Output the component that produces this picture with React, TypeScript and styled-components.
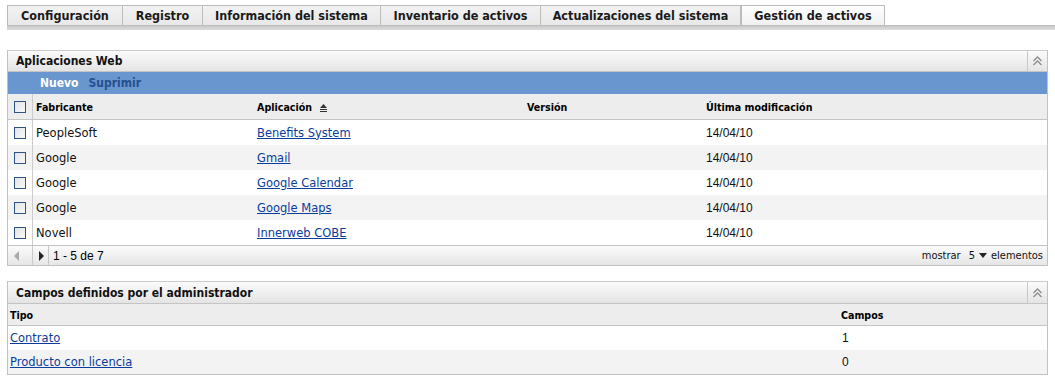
import React from "react";
import styled, { createGlobalStyle } from "styled-components";

const Global = createGlobalStyle`
  html, body { margin: 0; padding: 0; background: #fff; }
  body { font-family: "DejaVu Sans", Verdana, sans-serif; font-size: 12px; color: #000; }
`;

const Page = styled.div`
  width: 1055px;
  height: 383px;
  overflow: hidden;
  padding-top: 5px;
  box-sizing: border-box;
`;

const TabBar = styled.div`
  margin-left: 7px;
  display: flex;
  flex-direction: column;
`;

const TabRow = styled.div`
  display: flex;
  height: 20px;
`;

const Tab = styled.div<{ $w: number; $active?: boolean }>`
  width: ${(p) => p.$w}px;
  box-sizing: border-box;
  border: 1px solid #bcbcbc;
  border-bottom: none;
  border-left: ${(p) => (p.$active ? "1px solid #bcbcbc" : "none")};
  &:first-child { border-left: 1px solid #bcbcbc; }
  background: ${(p) =>
    p.$active
      ? "linear-gradient(#ffffff, #f0f0f0)"
      : "linear-gradient(#f2f2f2, #e8e8e8)"};
  display: flex;
  align-items: center;
  justify-content: center;
  font-family: "DejaVu Sans Condensed", "DejaVu Sans", sans-serif;
  font-weight: bold;
  font-size: 12.5px;
  color: #1a1a1a;
  padding-bottom: 1px;
`;

const TabStrip = styled.div`
  height: 5px;
  background: linear-gradient(#c9c9c9, #dddddd);
  border-top: 1px solid #bdbdbd;
  box-sizing: border-box;
`;

const Panel = styled.div<{ $mt: number }>`
  margin: ${(p) => p.$mt}px 0 0 7px;
  width: 1041px;
  box-sizing: border-box;
  border: 1px solid #c2c2c2;
  border-top-color: #cccccc;
`;

const PanelHeader = styled.div<{ $h: number }>`
  height: ${(p) => p.$h}px;
  display: flex;
  align-items: stretch;
  background: linear-gradient(#fbfbfb, #e4e4e4);
  border-bottom: 1px solid #c4c4c4;
  box-sizing: border-box;
`;

const PanelTitle = styled.div`
  flex: 1;
  display: flex;
  align-items: center;
  padding-left: 8px;
  font-family: "DejaVu Sans Condensed", "DejaVu Sans", sans-serif;
  font-weight: bold;
  font-size: 12px;
  color: #111;
`;

const Collapse = styled.div`
  width: 19px;
  border-left: 1px solid #c8c8c8;
  display: flex;
  align-items: center;
  justify-content: center;
`;

const Toolbar = styled.div`
  height: 22px;
  background: #6a96cf;
  display: flex;
  align-items: center;
  padding-left: 32px;
  gap: 10px;
  font-family: "DejaVu Sans Condensed", "DejaVu Sans", sans-serif;
  font-weight: bold;
  font-size: 12px;
`;

const ToolItem = styled.span<{ $on?: boolean }>`
  color: ${(p) => (p.$on ? "#ffffff" : "#264f8e")};
`;

const Grid = styled.div<{ $cols: string }>`
  display: grid;
  grid-template-columns: ${(p) => p.$cols};
`;

const HeadRow = styled(Grid)<{ $h: number }>`
  height: ${(p) => p.$h}px;
  background: #ededed;
  border-bottom: 1px solid #c4c4c4;
  box-sizing: border-box;
  font-family: "DejaVu Sans Condensed", "DejaVu Sans", sans-serif;
  font-weight: bold;
  font-size: 10.6px;
`;

const Row = styled(Grid)<{ $alt?: boolean; $h?: number }>`
  height: ${(p) => p.$h ?? 25}px;
  background: ${(p) => (p.$alt ? "#f3f3f3" : "#ffffff")};
  font-size: 11.5px;
  color: #111;
`;

const Cell = styled.div<{ $check?: boolean; $pl?: number }>`
  display: flex;
  align-items: center;
  padding-left: ${(p) => (p.$pl ?? 3)}px;
  white-space: nowrap;
  ${(p) =>
    p.$check
      ? "justify-content: center; padding-left: 0; border-right: 1px solid #cccccc;"
      : ""}
`;

const Check = styled.span`
  width: 12px;
  height: 12px;
  box-sizing: border-box;
  border: 1px solid #2e5486;
  background: linear-gradient(135deg, #e4e4e4, #f8f8f8);
  margin-left: -1px;
`;

const Link = styled.a`
  color: #0a3c9b;
  text-decoration: underline;
  cursor: pointer;
`;

const Footer = styled.div`
  height: 19px;
  border-top: 1px solid #c4c4c4;
  background: linear-gradient(#fafafa, #e6e6e6);
  display: flex;
  align-items: stretch;
  font-size: 11px;
`;

const PagerBtn = styled.div<{ $w: number; $pl?: number }>`
  width: ${(p) => p.$w}px;
  box-sizing: border-box;
  border-right: 1px solid #c8c8c8;
  display: flex;
  align-items: center;
  justify-content: ${(p) => (p.$pl !== undefined ? "flex-start" : "center")};
  padding-left: ${(p) => p.$pl ?? 0}px;
`;

const PagerText = styled.div`
  flex: 1;
  display: flex;
  align-items: center;
  padding-left: 4px;
  font-family: "Liberation Sans", Arial, sans-serif;
  font-size: 12px;
`;

const PageSize = styled.div`
  display: flex;
  align-items: center;
  gap: 4px;
  padding-right: 4px;
  font-family: "DejaVu Sans Condensed", "DejaVu Sans", sans-serif;
  font-size: 11px;
  color: #111;
`;

const SizeValue = styled.span`
  margin-left: 4px;
`;

const DateText = styled.span`
  font-family: "Liberation Sans", Arial, sans-serif;
  font-size: 12px;
`;

const SortSvg = styled.svg`
  margin-left: 7px;
  margin-top: 2px;
`;

const CollapseIcon = () => (
  <svg width="11" height="10" viewBox="0 0 11 10">
    <path d="M1.5 5 L5.5 1 L9.5 5" fill="none" stroke="#8c8c8c" strokeWidth="1.3" />
    <path d="M1.5 9 L5.5 5 L9.5 9" fill="none" stroke="#8c8c8c" strokeWidth="1.3" />
  </svg>
);

const SortIcon = () => (
  <SortSvg width="9" height="8" viewBox="0 0 9 8">
    <path d="M4.5 0 L8 4 L1 4 Z" fill="#333" />
    <rect x="1" y="5" width="7" height="1" fill="#333" />
    <rect x="1" y="7" width="7" height="1" fill="#333" />
  </SortSvg>
);

const Arrow = ({ dir, color }: { dir: "l" | "r"; color: string }) => (
  <svg width="6" height="10" viewBox="0 0 6 10">
    {dir === "l" ? (
      <path d="M5 0 L0 5 L5 10 Z" fill={color} />
    ) : (
      <path d="M1 0 L6 5 L1 10 Z" fill={color} />
    )}
  </svg>
);

const tabs = [
  { label: "Configuración", w: 116 },
  { label: "Registro", w: 80 },
  { label: "Información del sistema", w: 178 },
  { label: "Inventario de activos", w: 160 },
  { label: "Actualizaciones del sistema", w: 200 },
  { label: "Gestión de activos", w: 144, active: true },
];

const apps = [
  { vendor: "PeopleSoft", app: "Benefits System", date: "14/04/10" },
  { vendor: "Google", app: "Gmail", date: "14/04/10" },
  { vendor: "Google", app: "Google Calendar", date: "14/04/10" },
  { vendor: "Google", app: "Google Maps", date: "14/04/10" },
  { vendor: "Novell", app: "Innerweb COBE", date: "14/04/10" },
];

const appCols = "25px 221px 270px 179px 1fr";
const fieldCols = "831px 1fr";

export default function App() {
  return (
    <>
      <Global />
      <Page>
        <TabBar>
          <TabRow>
            {tabs.map((t) => (
              <Tab key={t.label} $w={t.w} $active={t.active}>
                {t.label}
              </Tab>
            ))}
          </TabRow>
          <TabStrip />
        </TabBar>

        <Panel $mt={20}>
          <PanelHeader $h={21}>
            <PanelTitle>Aplicaciones Web</PanelTitle>
            <Collapse>
              <CollapseIcon />
            </Collapse>
          </PanelHeader>
          <Toolbar>
            <ToolItem $on>Nuevo</ToolItem>
            <ToolItem>Suprimir</ToolItem>
          </Toolbar>
          <HeadRow $cols={appCols} $h={26}>
            <Cell $check>
              <Check />
            </Cell>
            <Cell>Fabricante</Cell>
            <Cell>
              Aplicación
              <SortIcon />
            </Cell>
            <Cell>Versión</Cell>
            <Cell>Última modificación</Cell>
          </HeadRow>
          {apps.map((a, i) => (
            <Row key={a.app} $cols={appCols} $alt={i % 2 === 1}>
              <Cell $check>
                <Check />
              </Cell>
              <Cell>{a.vendor}</Cell>
              <Cell>
                <Link>{a.app}</Link>
              </Cell>
              <Cell />
              <Cell>
                <DateText>{a.date}</DateText>
              </Cell>
            </Row>
          ))}
          <Footer>
            <PagerBtn $w={25} $pl={6}>
              <Arrow dir="l" color="#a8a8a8" />
            </PagerBtn>
            <PagerBtn $w={16}>
              <Arrow dir="r" color="#222" />
            </PagerBtn>
            <PagerText>1 - 5 de 7</PagerText>
            <PageSize>
              <span>mostrar</span>
              <SizeValue>5</SizeValue>
              <svg width="8" height="5" viewBox="0 0 8 5">
                <path d="M0 0 L8 0 L4 5 Z" fill="#222" />
              </svg>
              <span>elementos</span>
            </PageSize>
          </Footer>
        </Panel>

        <Panel $mt={15}>
          <PanelHeader $h={22}>
            <PanelTitle>Campos definidos por el administrador</PanelTitle>
            <Collapse>
              <CollapseIcon />
            </Collapse>
          </PanelHeader>
          <HeadRow $cols={fieldCols} $h={22}>
            <Cell $pl={2}>Tipo</Cell>
            <Cell $pl={2}>Campos</Cell>
          </HeadRow>
          <Row $cols={fieldCols} $h={24}>
            <Cell $pl={2}>
              <Link>Contrato</Link>
            </Cell>
            <Cell $pl={3}>
              <DateText>1</DateText>
            </Cell>
          </Row>
          <Row $cols={fieldCols} $alt $h={24}>
            <Cell $pl={2}>
              <Link>Producto con licencia</Link>
            </Cell>
            <Cell $pl={3}>
              <DateText>0</DateText>
            </Cell>
          </Row>
        </Panel>
      </Page>
    </>
  );
}
